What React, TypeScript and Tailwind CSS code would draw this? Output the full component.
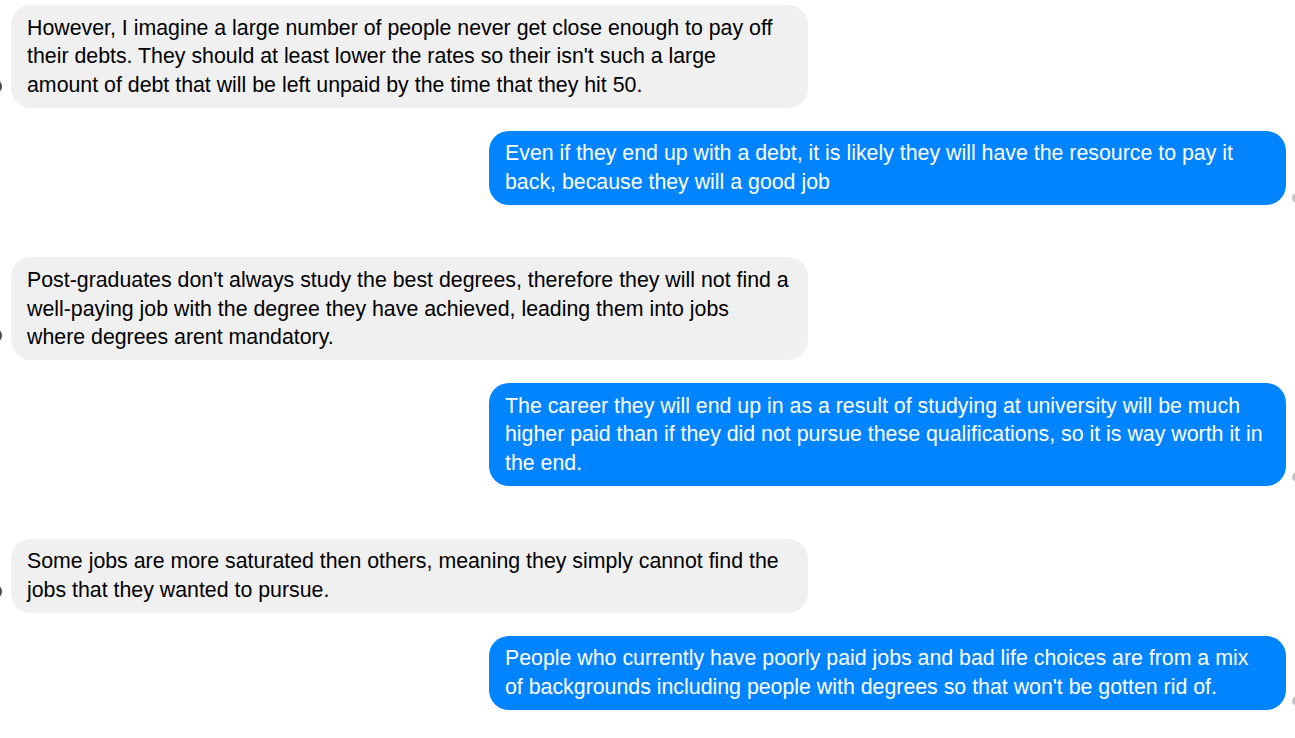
import React from "react";

type Msg = { side: "left" | "right"; text: string; gapTop: string; dot: string };

const msgs: Msg[] = [
  {
    side: "left",
    text: "However, I imagine a large number of people never get close enough to pay off their debts. They should at least lower the rates so their isn't such a large amount of debt that will be left unpaid by the time that they hit 50.",
    gapTop: "mt-[5px]",
    dot: "bottom-[14px]",
  },
  {
    side: "right",
    text: "Even if they end up with a debt, it is likely they will have the resource to pay it back, because they will a good job",
    gapTop: "mt-[23px]",
    dot: "bottom-[2px]",
  },
  {
    side: "left",
    text: "Post-graduates don't always study the best degrees, therefore they will not find a well-paying job with the degree they have achieved, leading them into jobs where degrees arent mandatory.",
    gapTop: "mt-[52.5px]",
    dot: "bottom-[17px]",
  },
  {
    side: "right",
    text: "The career they will end up in as a result of studying at university will be much higher paid than if they did not pursue these qualifications, so it is way worth it in the end.",
    gapTop: "mt-[23px]",
    dot: "bottom-[4px]",
  },
  {
    side: "left",
    text: "Some jobs are more saturated then others, meaning they simply cannot find the jobs that they wanted to pursue.",
    gapTop: "mt-[52.5px]",
    dot: "bottom-[14px]",
  },
  {
    side: "right",
    text: "People who currently have poorly paid jobs and bad life choices are from a mix of backgrounds including people with degrees so that won't be gotten rid of.",
    gapTop: "mt-[23px]",
    dot: "bottom-[4px]",
  },
];

export default function App() {
  return (
    <div
      className="w-[1295px] h-[738px] bg-white overflow-hidden flex flex-col"
      style={{ fontFamily: '"Liberation Sans", Arial, sans-serif' }}
    >
      {msgs.map((m, i) => (
        <div
          key={i}
          className={`relative flex ${m.gapTop} ${
            m.side === "left" ? "justify-start pl-[11px]" : "justify-end pr-[9px]"
          }`}
        >
          {m.side === "left" ? (
            <span
              className={`absolute left-[-13px] ${m.dot} w-[15px] h-[15px] rounded-full bg-[#4a4a4a]`}
            />
          ) : (
            <span
              className={`absolute right-[-7px] ${m.dot} w-[10px] h-[10px] rounded-full bg-[#c4c4c4]`}
            />
          )}
          <div
            className={`w-[797px] rounded-[20px] px-4 py-[8.5px] text-[21.33px] leading-[28.6px] ${
              m.side === "left" ? "bg-[#f0f0f0] text-black" : "bg-[#0084ff] text-white"
            }`}
          >
            {m.text}
          </div>
        </div>
      ))}
    </div>
  );
}
